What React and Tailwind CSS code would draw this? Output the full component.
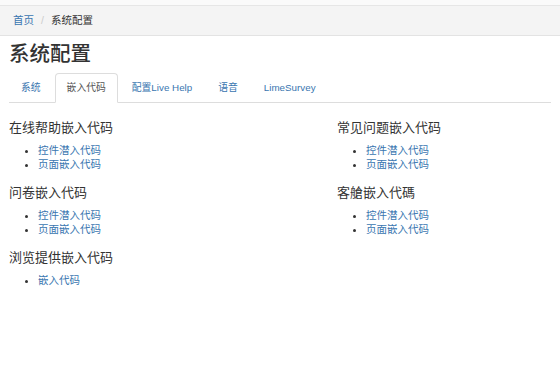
import React from "react";

const tabs = ["系统", "嵌入代码", "配置Live Help", "语音", "LimeSurvey"];

const sections = [
  { title: "在线帮助嵌入代码", links: ["控件潜入代码", "页面嵌入代码"] },
  { title: "常见问题嵌入代码", links: ["控件潜入代码", "页面嵌入代码"] },
  { title: "问卷嵌入代码", links: ["控件潜入代码", "页面嵌入代码"] },
  { title: "客艙嵌入代碼", links: ["控件潜入代码", "页面嵌入代码"] },
  { title: "浏览提供嵌入代码", links: ["嵌入代码"] },
];

const font = "font-['Liberation_Sans','Noto_Sans_CJK_SC',sans-serif]";

const Section = ({ title, links }) => (
  <div className="h-[65px]">
    <h3 className="text-[13px] leading-[18px] text-[#333]">{title}</h3>
    <ul className="mt-[6px] list-disc pl-[29px] text-[10.5px] leading-[14px] marker:text-[#333]">
      {links.map((l) => (
        <li key={l}>
          <a href="#" className="text-[#3a76b0]">
            {l}
          </a>
        </li>
      ))}
    </ul>
  </div>
);

export default function App() {
  return (
    <div className={`${font} min-h-[374px] bg-white text-[#333]`}>
      <div className="h-[6px] border-b border-[#e6e6e6] bg-[#fafafa]" />
      <div className="flex h-[30px] items-center gap-[7px] border-b border-[#e3e3e3] bg-[#f4f4f4] px-[13px] text-[10.5px]">
        <a href="#" className="text-[#3a76b0]">首页</a>
        <span className="text-[#ccc]">/</span>
        <span className="text-[#333]">系统配置</span>
      </div>

      <div className="px-[9px]">
        <h1 className="mt-[3px] text-[20.5px] font-medium leading-[30px]">系统配置</h1>

        <div className="mt-[4px] flex border-b border-[#ddd] text-[9.8px]">
          {tabs.map((t, i) =>
            i === 1 ? (
              <div
                key={t}
                className="-mb-px mr-[2px] rounded-t-[4px] border border-[#ddd] border-b-white bg-white px-[11px] py-[7px] leading-[13px] text-[#555]"
              >
                {t}
              </div>
            ) : (
              <div key={t} className="mr-[2px] border border-transparent px-[11px] py-[7px] leading-[13px] text-[#3a76b0]">
                {t}
              </div>
            )
          )}
        </div>

        <div className="mt-[16px] grid grid-cols-[328px_1fr]">
          {sections.map((s) => (
            <Section key={s.title} {...s} />
          ))}
        </div>
      </div>
    </div>
  );
}
